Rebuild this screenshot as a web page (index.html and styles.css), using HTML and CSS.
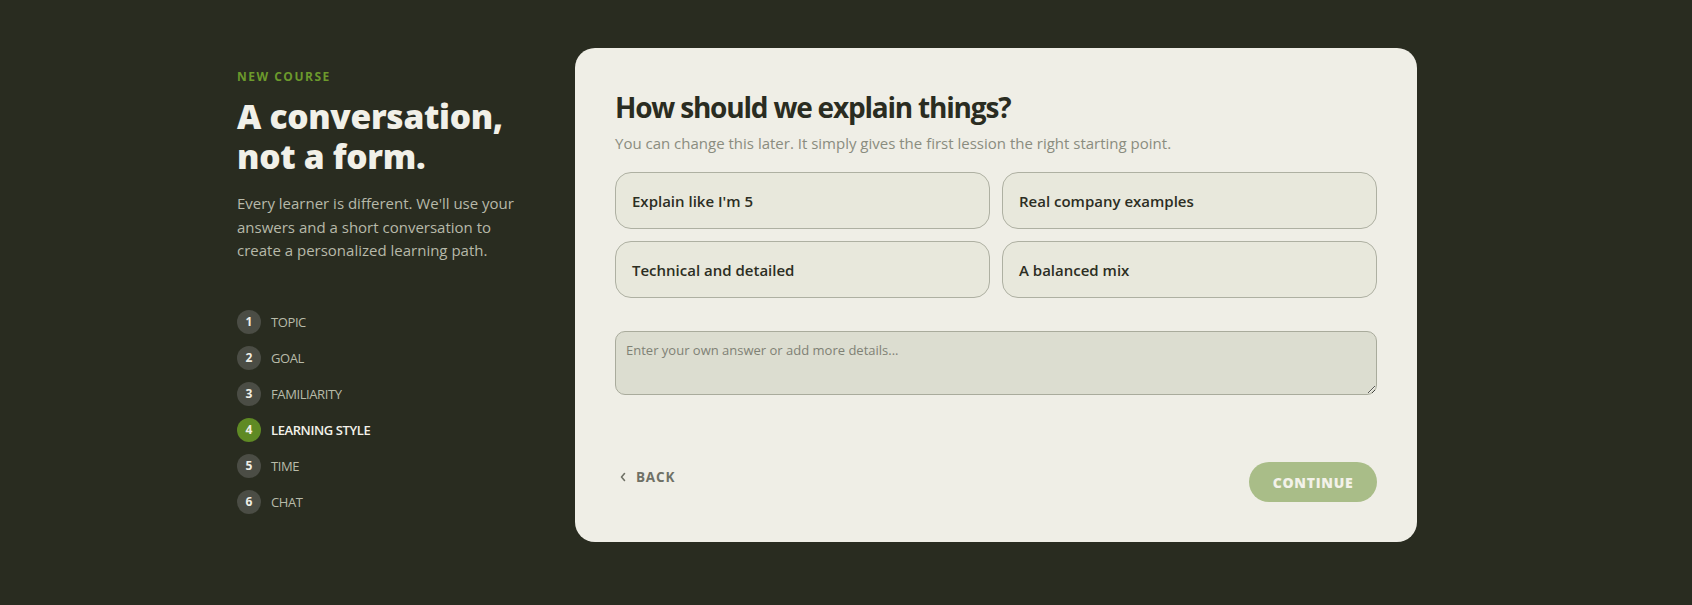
FILE: index.html
```html
<!DOCTYPE html>
<html lang="en">
<head>
<meta charset="utf-8">
<title>New course</title>
<link rel="stylesheet" href="styles.css">
</head>
<body>
<div class="page">
  <aside class="intro">
    <div class="eyebrow">NEW COURSE</div>
    <h1 class="title">A conversation,<br>not a form.</h1>
    <p class="lead">Every learner is different. We'll use your answers and a short conversation to create a personalized learning path.</p>
    <ol class="steps">
      <li class="step"><span class="num">1</span><span class="label">TOPIC</span></li>
      <li class="step"><span class="num">2</span><span class="label">GOAL</span></li>
      <li class="step"><span class="num">3</span><span class="label">FAMILIARITY</span></li>
      <li class="step active"><span class="num">4</span><span class="label">LEARNING STYLE</span></li>
      <li class="step"><span class="num">5</span><span class="label">TIME</span></li>
      <li class="step"><span class="num">6</span><span class="label">CHAT</span></li>
    </ol>
  </aside>
  <main class="card">
    <h2 class="question">How should we explain things?</h2>
    <p class="hint">You can change this later. It simply gives the first lession the right starting point.</p>
    <div class="options">
      <button class="option">Explain like I'm 5</button>
      <button class="option">Real company examples</button>
      <button class="option">Technical and detailed</button>
      <button class="option">A balanced mix</button>
    </div>
    <textarea class="custom" placeholder="Enter your own answer or add more details..."></textarea>
    <div class="actions">
      <button class="back"><svg class="chev" width="8" height="10" viewBox="0 0 8 10"><path d="M5.5 1.5 L2.5 5 L5.5 8.5" fill="none" stroke="currentColor" stroke-width="1.6" stroke-linecap="round" stroke-linejoin="round"/></svg>BACK</button>
      <button class="continue">CONTINUE</button>
    </div>
  </main>
</div>
</body>
</html>
```

FILE: styles.css
```css
* { box-sizing: border-box; }
html, body { margin: 0; padding: 0; }
body {
  background: #292c20;
  font-family: "Open Sans", "Noto Sans", sans-serif;
  color: #f0efe6;
  height: 605px;
  overflow: hidden;
}
.page {
  width: 1218px;
  margin: 0 auto;
  padding-top: 48px;
  display: grid;
  grid-template-columns: 300px 842px;
  column-gap: 38px;
  align-items: start;
}
.intro { padding-top: 21px; }
.eyebrow {
  font-size: 12px;
  font-weight: 700;
  letter-spacing: 1.5px;
  color: #6c9a2c;
  line-height: 16px;
}
.title {
  margin: 11px 0 0;
  font-size: 33.5px;
  line-height: 40px;
  font-weight: 800;
  color: #f1f0e8;
  letter-spacing: -0.3px;
}
.lead {
  margin: 16px 0 0;
  font-size: 15px;
  line-height: 23.5px;
  color: #b7b9a9;
}
.steps {
  list-style: none;
  margin: 47px 0 0;
  padding: 0;
  display: flex;
  flex-direction: column;
  gap: 12px;
}
.step {
  display: flex;
  align-items: center;
  gap: 10px;
  height: 24px;
}
.num {
  width: 24px;
  height: 24px;
  border-radius: 50%;
  background: #4b4d45;
  color: #f0efe6;
  font-size: 12px;
  font-weight: 700;
  display: flex;
  align-items: center;
  justify-content: center;
}
.label {
  font-size: 13px;
  color: #b8bba9;
  letter-spacing: -0.4px;
}
.step.active .num { background: #5f8a24; }
.step.active .label { color: #f3f2ea; font-weight: 600; }

.card {
  background: #efeee6;
  border-radius: 20px;
  padding: 41px 40px 40px 40px;
  height: 494px;
  display: flex;
  flex-direction: column;
}
.question {
  margin: 0;
  font-size: 28px;
  line-height: 36px;
  font-weight: 700;
  color: #2a2c21;
  letter-spacing: -1.2px;
}
.hint {
  margin: 7px 0 0;
  font-size: 15px;
  line-height: 22px;
  color: #8a8c7f;
}
.options {
  margin-top: 18px;
  display: grid;
  grid-template-columns: 1fr 1fr;
  gap: 12px;
}
.option {
  height: 57px;
  border: 1px solid #aeb0a2;
  border-radius: 16px;
  background: #e8e8dc;
  font-family: inherit;
  font-size: 15px;
  font-weight: 600;
  color: #2c2e23;
  text-align: left;
  padding: 0 16px;
}
.custom {
  margin-top: 33px;
  height: 64px;
  width: 100%;
  resize: vertical;
  background: #dcddd0;
  border: 1px solid #a9ab9c;
  border-radius: 10px;
  padding: 9px 10px;
  font-family: inherit;
  font-size: 13px;
  color: #2c2e23;
}
.custom::placeholder { color: #7f8175; }
.actions {
  margin-top: auto;
  display: flex;
  justify-content: space-between;
  align-items: center;
}
.back {
  background: none;
  border: 0;
  padding: 0 0 11px 4px;
  display: flex;
  align-items: center;
  gap: 9px;
  font-family: inherit;
  font-size: 13.5px;
  font-weight: 700;
  letter-spacing: 0.8px;
  color: #6f7166;
}
.continue {
  width: 128px;
  height: 40px;
  border: 0;
  border-radius: 20px;
  background: #a9bd88;
  color: #f3f2e9;
  font-family: inherit;
  font-size: 14px;
  font-weight: 800;
  letter-spacing: 0.7px;
}
```
